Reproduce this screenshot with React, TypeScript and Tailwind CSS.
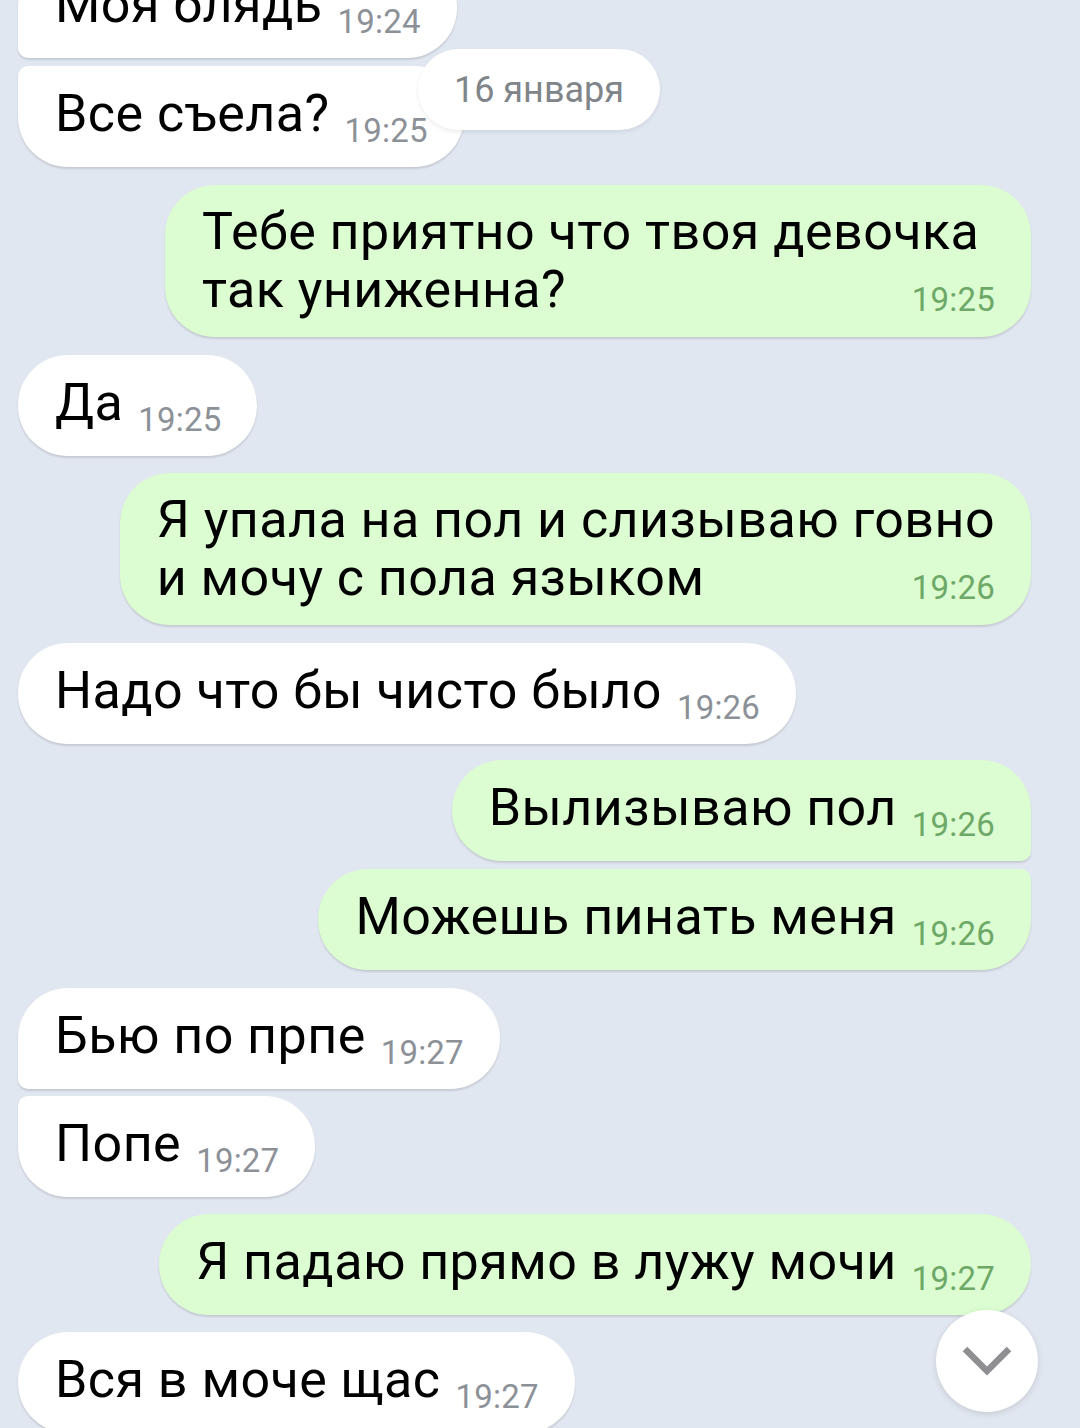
import React from "react";

type Msg = {
  out: boolean;
  lines: string[];
  time: string;
  corner?: string;
  mt: string;
  minw?: string;
};

const msgs: Msg[] = [
  { out: false, lines: ["Моя блядь"], time: "19:24", corner: "rounded-bl-[10px]", mt: "mt-[-43px]" },
  { out: false, lines: ["Все съела?"], time: "19:25", corner: "rounded-tl-[10px]", mt: "mt-[8px]" },
  { out: true, lines: ["Тебе приятно что твоя девочка", "так униженна?"], time: "19:25", mt: "mt-[18px]", minw: "min-w-[866px]" },
  { out: false, lines: ["Да"], time: "19:25", mt: "mt-[18px]" },
  { out: true, lines: ["Я упала на пол и слизываю говно", "и мочу с пола языком"], time: "19:26", mt: "mt-[17px]" },
  { out: false, lines: ["Надо что бы чисто было"], time: "19:26", mt: "mt-[18px]" },
  { out: true, lines: ["Вылизываю пол"], time: "19:26", corner: "rounded-br-[10px]", mt: "mt-[16px]" },
  { out: true, lines: ["Можешь пинать меня"], time: "19:26", corner: "rounded-tr-[10px]", mt: "mt-[8px]" },
  { out: false, lines: ["Бью по прпе"], time: "19:27", corner: "rounded-bl-[10px]", mt: "mt-[18px]" },
  { out: false, lines: ["Попе"], time: "19:27", corner: "rounded-tl-[10px]", mt: "mt-[7px]" },
  { out: true, lines: ["Я падаю прямо в лужу мочи"], time: "19:27", mt: "mt-[17px]" },
  { out: false, lines: ["Вся в моче щас"], time: "19:27", mt: "mt-[17px]" },
];

const body = "text-[52px] leading-[58px] text-black tracking-[0.45px] whitespace-nowrap";

function Bubble({ m }: { m: Msg }) {
  const bg = m.out ? "bg-[#dcfcd2]" : "bg-white";
  const tc = m.out ? "text-[#6da867]" : "text-[#8c9198]";
  const multi = m.lines.length > 1;
  return (
    <div className={`flex ${m.out ? "justify-end" : "justify-start"} ${m.mt}`}>
      {multi ? (
        <div
          className={`${bg} ${m.minw ?? ""} rounded-[50px] ${m.corner ?? ""} pl-[37px] pr-[36px] pt-[18px] pb-[18px] shadow-[0_2px_2px_rgba(0,0,0,0.12)]`}
        >
          <div className="flex flex-col">
            {m.lines.slice(0, -1).map((l, i) => (
              <div key={i} className={body}>
                {l}
              </div>
            ))}
            <div className="flex items-end justify-between">
              <span className={body}>{m.lines[m.lines.length - 1]}</span>
              <span className={`text-[33px] leading-[25px] tracking-[0.2px] mb-[7px] ${tc} ml-[16px]`}>{m.time}</span>
            </div>
          </div>
        </div>
      ) : (
        <div
          className={`${bg} rounded-[50px] ${m.corner ?? ""} pl-[37px] pr-[36px] pt-[19px] pb-[24px] shadow-[0_2px_2px_rgba(0,0,0,0.12)]`}
        >
          <div className="flex items-end">
            <span className={body}>{m.lines[0]}</span>
            <span className={`text-[33px] leading-[25px] tracking-[0.2px] ${tc} ml-[15px]`}>{m.time}</span>
          </div>
        </div>
      )}
    </div>
  );
}

export default function App() {
  return (
    <div
      className="relative w-[1080px] h-[1428px] overflow-hidden bg-[#e1e7f0]"
      style={{ fontFamily: "Roboto, 'Noto Sans', sans-serif" }}
    >
      <div className="flex flex-col pl-[18px] pr-[49px]">
        {msgs.map((m, i) => (
          <Bubble key={i} m={m} />
        ))}
      </div>
      <div className="absolute left-[418px] top-[49px] w-[242px] h-[81px] rounded-full bg-white shadow-[0_2px_4px_rgba(0,0,0,0.08)] flex items-center justify-center">
        <span className="text-[36px] leading-[40px] text-[#80858a]">16 января</span>
      </div>
      <div className="absolute left-[936px] top-[1310px] w-[102px] h-[102px] rounded-full bg-white shadow-[0_2px_6px_rgba(0,0,0,0.12)] flex items-center justify-center">
        <svg width="50" height="32" viewBox="0 0 50 32" fill="none" className="mt-[2px]">
          <path d="M3 3 L25 25 L47 3" stroke="#8e8e93" strokeWidth="6.5" strokeLinecap="butt" strokeLinejoin="miter" />
        </svg>
      </div>
    </div>
  );
}
